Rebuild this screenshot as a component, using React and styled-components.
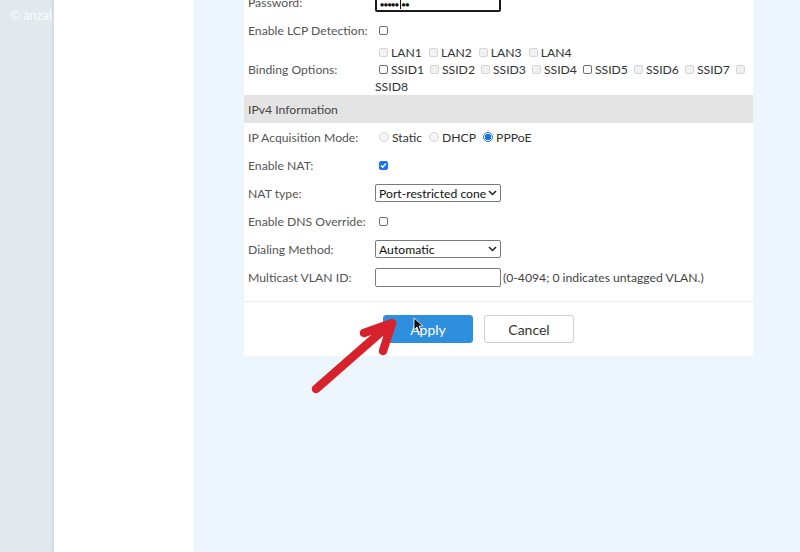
import React from "react";
import styled, { createGlobalStyle, css } from "styled-components";

const Global = createGlobalStyle`
  html, body {
    margin: 0;
    padding: 0;
    overflow: hidden;
  }
  body {
    font-family: Lato, "Noto Sans", sans-serif;
  }
`;

const Shell = styled.div`
  position: relative;
  display: grid;
  grid-template-columns: 54px 139px 1fr;
  width: 800px;
  height: 552px;
  overflow: hidden;
`;

const Rail = styled.div`
  background: #e2e9ec;
  box-shadow: inset -2px 0 2px rgba(0, 0, 0, 0.06);
  padding: 8px 0 0 10px;
  overflow: hidden;
  white-space: nowrap;
  color: rgba(255, 255, 255, 0.9);
  font-size: 12.5px;
`;

const Sidebar = styled.div`
  background: #ffffff;
`;

const Main = styled.div`
  background: #eef6fd;
  padding-left: 51px;
  overflow: hidden;
`;

const Panel = styled.div`
  width: 509px;
  margin-top: -12px;
  background: #ffffff;
  padding: 0 0 0 4px;
  box-sizing: border-box;
`;

const Row = styled.div`
  display: flex;
  align-items: center;
  min-height: 28px;
`;

const Label = styled.div`
  width: 127px;
  flex: none;
  font-size: 12.2px;
  color: #555;
  white-space: nowrap;
`;

const Value = styled.div`
  display: flex;
  align-items: center;
  font-size: 12.2px;
  color: #333;
  white-space: nowrap;
`;

const Section = styled.div`
  margin-left: -4px;
  padding-left: 4px;
  height: 28px;
  display: flex;
  align-items: center;
  background: #e4e4e4;
  font-size: 12.2px;
  color: #444;
`;

const Lines = styled.div`
  display: flex;
  flex-direction: column;
`;

const Line = styled.div`
  display: flex;
  align-items: center;
  height: 17px;
  font-size: 12.2px;
  color: #333;
  white-space: nowrap;
`;

const Opt = styled.span`
  display: inline-flex;
  align-items: center;
  gap: 3px;
  margin-right: ${(p) => (p.$tight ? "2px" : "3px")};
`;

const Box = styled.span`
  display: inline-block;
  width: 9px;
  height: 9px;
  border-radius: 2px;
  box-sizing: border-box;
  margin-left: 4px;
  ${(p) =>
    p.$checked
      ? css`
          background: #1a73e8;
          border: 1px solid #1a73e8;
        `
      : p.$disabled
      ? css`
          background: #f1f1f1;
          border: 1px solid #d6d6d6;
        `
      : css`
          background: #fff;
          border: 1px solid #6f6f6f;
        `}
`;

const Radio = styled.span`
  display: inline-block;
  width: 10px;
  height: 10px;
  border-radius: 50%;
  box-sizing: border-box;
  margin-left: 4px;
  ${(p) =>
    p.$on
      ? css`
          border: 1px solid #1a73e8;
          background: radial-gradient(circle, #1a73e8 0 3px, #fff 3.5px);
        `
      : css`
          border: 1px solid #d3d3d3;
          background: #f6f6f6;
        `}
`;

const Field = styled.div`
  width: 126px;
  height: ${(p) => (p.$tall ? "19px" : "18px")};
  box-sizing: border-box;
  border: ${(p) => (p.$focus ? "2px solid #1b1b1b" : "1px solid #7a7a7a")};
  border-radius: 2px;
  display: flex;
  align-items: center;
  padding: 0 3px;
  font-size: 12.2px;
  color: #111;
  overflow: hidden;
  gap: 1px;
  flex: none;
`;

const FieldText = styled.span`
  flex: 1;
  overflow: hidden;
  white-space: nowrap;
`;

const Dots = styled.span`
  font-size: 7px;
  letter-spacing: -0.5px;
  color: #111;
`;

const Caret = styled.span`
  display: inline-block;
  width: 1px;
  height: 11px;
  background: #111;
  margin: 0 1px;
  vertical-align: middle;
`;

const Hint = styled.span`
  font-size: 12.2px;
  color: #444;
  margin-left: 2px;
  white-space: nowrap;
`;

const Footer = styled.div`
  margin: 10px 0 0 -4px;
  border-top: 1px solid #ececec;
  padding: 13px 0 13px 139px;
  display: flex;
  gap: 11px;
`;

const Button = styled.button`
  width: 90px;
  height: 28px;
  border-radius: 3px;
  font-family: inherit;
  font-size: 14px;
  ${(p) =>
    p.$primary
      ? css`
          background: #2e8fde;
          border: 1px solid #2e8fde;
          color: #fff;
        `
      : css`
          background: #fff;
          border: 1px solid #cfcfcf;
          color: #333;
        `}
`;

const Overlay = styled.svg`
  position: absolute;
  left: 0;
  top: 0;
  pointer-events: none;
`;

const Chevron = () => (
  <svg width="9" height="6" viewBox="0 0 9 6">
    <path d="M1 1l3.5 3.5L8 1" fill="none" stroke="#222" strokeWidth="1.5" />
  </svg>
);

const Select = ({ children }) => (
  <Field>
    <FieldText>{children}</FieldText>
    <Chevron />
  </Field>
);

const Check = () => (
  <Box $checked>
    <svg width="7" height="7" viewBox="0 0 7 7" style={{ display: "block" }}>
      <path d="M1 3.6l1.6 1.6L6 1.6" fill="none" stroke="#fff" strokeWidth="1.4" />
    </svg>
  </Box>
);

const lans = ["LAN1", "LAN2", "LAN3", "LAN4"];
const ssids = ["SSID1", "SSID2", "SSID3", "SSID4", "SSID5", "SSID6", "SSID7"];
const enabled = ["SSID1", "SSID5"];

export default function App() {
  return (
    <>
      <Global />
      <Shell>
        <Rail>© anzal</Rail>
        <Sidebar />
        <Main>
          <Panel>
            <Row>
              <Label>Password:</Label>
              <Field $focus $tall>
                <FieldText>
                  <Dots>●●●●●</Dots>
                  <Caret />
                  <Dots>●●</Dots>
                </FieldText>
              </Field>
            </Row>
            <Row>
              <Label>Enable LCP Detection:</Label>
              <Value>
                <Box />
              </Value>
            </Row>
            <Row>
              <Label>Binding Options:</Label>
              <Lines>
                <Line>
                  {lans.map((l) => (
                    <Opt key={l}>
                      <Box $disabled />
                      {l}
                    </Opt>
                  ))}
                </Line>
                <Line>
                  {ssids.map((s) => (
                    <Opt key={s} $tight>
                      <Box $disabled={!enabled.includes(s)} />
                      {s}
                    </Opt>
                  ))}
                  <Box $disabled />
                </Line>
                <Line>SSID8</Line>
              </Lines>
            </Row>
            <Section>IPv4 Information</Section>
            <Row>
              <Label>IP Acquisition Mode:</Label>
              <Value>
                <Opt>
                  <Radio />
                  Static
                </Opt>
                <Opt>
                  <Radio />
                  DHCP
                </Opt>
                <Opt>
                  <Radio $on />
                  PPPoE
                </Opt>
              </Value>
            </Row>
            <Row>
              <Label>Enable NAT:</Label>
              <Value>
                <Check />
              </Value>
            </Row>
            <Row>
              <Label>NAT type:</Label>
              <Select>Port-restricted cone NAT</Select>
            </Row>
            <Row>
              <Label>Enable DNS Override:</Label>
              <Value>
                <Box />
              </Value>
            </Row>
            <Row>
              <Label>Dialing Method:</Label>
              <Select>Automatic</Select>
            </Row>
            <Row>
              <Label>Multicast VLAN ID:</Label>
              <Field $tall />
              <Hint>(0-4094; 0 indicates untagged VLAN.)</Hint>
            </Row>
            <Footer>
              <Button $primary>Apply</Button>
              <Button>Cancel</Button>
            </Footer>
          </Panel>
        </Main>
        <Overlay width="800" height="552">
          <g stroke="#d8222b" strokeWidth="8.5" strokeLinecap="round" strokeLinejoin="round" fill="none">
            <path d="M316 389L389 325" />
            <path d="M364 333L392 323L383 351" />
          </g>
          <path
            d="M414 318v12l3-3 2 5 2-1-2-5h4z"
            fill="#111"
            stroke="#fff"
            strokeWidth="0.8"
          />
        </Overlay>
      </Shell>
    </>
  );
}
